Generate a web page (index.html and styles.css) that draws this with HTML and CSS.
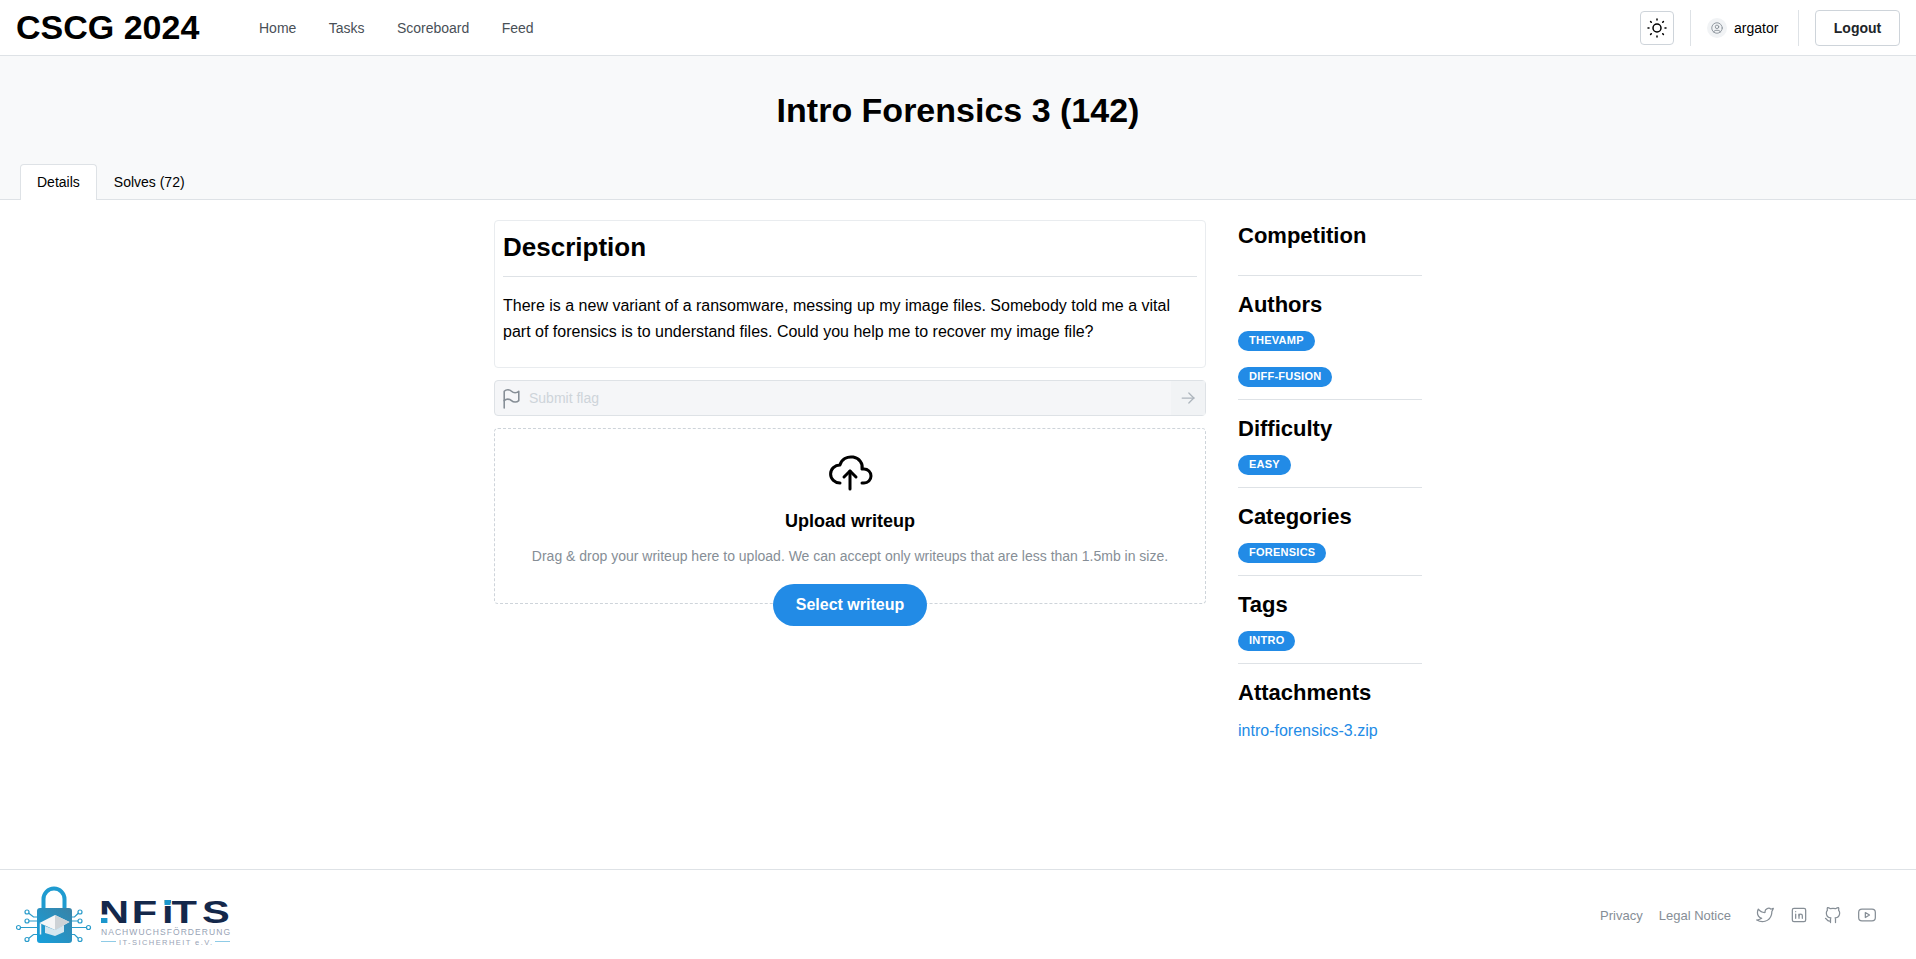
FILE: index.html
```html
<!DOCTYPE html>
<html lang="en">
<head>
    <meta charset="UTF-8">
    <meta name="viewport" content="width=device-width, initial-scale=1.0">
    <title>Intro Forensics 3</title>
    <link rel="stylesheet" href="styles.css">
</head>
<body>

<header class="topbar">
    <a class="brand" href="#">CSCG 2024</a>
    <nav class="nav">
        <a href="#">Home</a>
        <a href="#">Tasks</a>
        <a href="#">Scoreboard</a>
        <a href="#">Feed</a>
    </nav>
    <div class="topbar-right">
        <button class="theme-btn" aria-label="Toggle theme">
            <svg class="icon" width="24" height="24" viewBox="0 0 24 24" stroke-width="1.5"><circle cx="12" cy="12" r="4"/><path d="M3 12h1m8 -9v1m8 8h1m-9 8v1m-6.4 -15.4l.7 .7m12.1 -.7l-.7 .7m0 11.4l.7 .7m-12.1 -.7l-.7 .7"/></svg>
        </button>
        <div class="vline"></div>
        <div class="user">
            <span class="avatar">
                <svg class="icon" width="14" height="14" viewBox="0 0 24 24" stroke-width="1.5"><circle cx="12" cy="12" r="9"/><circle cx="12" cy="10" r="3"/><path d="M6.168 18.849a4 4 0 0 1 3.832 -2.849h4a4 4 0 0 1 3.834 2.855"/></svg>
            </span>
            <span>argator</span>
        </div>
        <div class="vline"></div>
        <button class="logout">Logout</button>
    </div>
</header>

<section class="hero">
    <h1>Intro Forensics 3 (142)</h1>
    <div class="tabs">
        <a class="tab active" href="#">Details</a>
        <a class="tab" href="#">Solves (72)</a>
    </div>
</section>

<main class="content">
    <div class="main-col">
        <div class="card">
            <h2>Description</h2>
            <hr>
            <p>There is a new variant of a ransomware, messing up my image files. Somebody told me a vital part of forensics is to understand files. Could you help me to recover my image file?</p>
        </div>

        <div class="flag-input">
            <svg class="icon flag-icon" width="25" height="25" viewBox="0 0 24 24" stroke-width="1.5"><path d="M5 5a5 5 0 0 1 7 0a5 5 0 0 0 7 0v9a5 5 0 0 1 -7 0a5 5 0 0 0 -7 0v-9z"/><path d="M5 21v-7"/></svg>
            <span class="placeholder">Submit flag</span>
            <span class="flag-send">
                <svg class="icon" width="20" height="20" viewBox="0 0 24 24" stroke-width="1.5"><path d="M5 12l14 0"/><path d="M13 18l6 -6"/><path d="M13 6l6 6"/></svg>
            </span>
        </div>

        <div class="dropzone">
            <svg class="icon upload-icon" width="48" height="48" viewBox="0 0 24 24" stroke-width="1.5"><path d="M7 18a4.6 4.4 0 0 1 0 -9a5 4.500 0 0 1 11 2h1a3.500 3.500 0 0 1 0 7h-1"/><path d="M9 15l3 -3l3 3"/><path d="M12 12l0 9"/></svg>
            <div class="drop-title">Upload writeup</div>
            <div class="drop-text">Drag &amp; drop your writeup here to upload. We can accept only writeups that are less than 1.5mb in size.</div>
            <button class="select-btn">Select writeup</button>
        </div>
    </div>

    <aside class="side-col">
        <div class="side-block competition">
            <h3>Competition</h3>
        </div>
        <div class="side-block">
            <h3>Authors</h3>
            <div class="badge-row"><span class="badge">thevamp</span></div>
            <div class="badge-row"><span class="badge">diff-fusion</span></div>
        </div>
        <div class="side-block">
            <h3>Difficulty</h3>
            <div class="badge-row"><span class="badge">easy</span></div>
        </div>
        <div class="side-block">
            <h3>Categories</h3>
            <div class="badge-row"><span class="badge">forensics</span></div>
        </div>
        <div class="side-block">
            <h3>Tags</h3>
            <div class="badge-row"><span class="badge">intro</span></div>
        </div>
        <div class="side-block last">
            <h3>Attachments</h3>
            <a class="attachment" href="#">intro-forensics-3.zip</a>
        </div>
    </aside>
</main>

<footer class="footer">
    <svg class="logo" width="216" height="63" viewBox="0 0 216 63">
        <defs>
            <linearGradient id="lock-fill" x1="0" y1="1" x2="1" y2="0">
                <stop offset="0" stop-color="#16a0dc"/>
                <stop offset="1" stop-color="#3a82a6"/>
            </linearGradient>
        </defs>
        <!-- circuit lines -->
        <g fill="none" stroke="#2a9ccb" stroke-width="1.2">
            <path d="M4 42.500h17M12 36h9M12.500 28l5 4h3.500M12.500 53.500l5 -4h3.500"/>
            <path d="M55 42.500h16M55 36h8M55 32h3.500l4 -4M55 49.500h3.500l4 4"/>
            <circle cx="2.500" cy="42.500" r="2" fill="#fff"/>
            <circle cx="11" cy="36" r="2" fill="#fff"/>
            <circle cx="11" cy="27" r="2" fill="#fff"/>
            <circle cx="11" cy="54.500" r="2" fill="#fff"/>
            <circle cx="64" cy="27" r="2" fill="#fff"/>
            <circle cx="64" cy="36" r="2" fill="#fff"/>
            <circle cx="72.500" cy="42.500" r="2" fill="#fff"/>
            <circle cx="64" cy="54.500" r="2" fill="#fff"/>
        </g>
        <path d="M27.500 24v-10a10.500 10.500 0 0 1 21 0v10" fill="none" stroke="#1f9bd0" stroke-width="4"/>
        <rect x="21" y="23" width="35" height="35" rx="3" fill="url(#lock-fill)"/>
        <path d="M29 41v7l10 3l9 -4v-7l-9 5z" fill="#d5e6ef"/>
        <path d="M23.500 38l15.500 -8l14.500 7l-14.500 8z" fill="#f5f6f7"/>
        <path d="M39 30l14.500 7l-14.500 8z" fill="#cdd2d6"/>
        <path d="M24.500 38.500v11" stroke="#f0f3f5" stroke-width="1.500"/>
        <text class="logo-main" transform="scale(1.3 1)" x="63.800 89 112.300 119.600 143" y="38" font-size="32">NFiTS</text>
        <rect class="logo-mark" x="148.500" y="15" width="6" height="5"/>
        <rect x="84" y="29.500" width="8" height="3.500" fill="#fff"/>
        <rect class="logo-mark" x="85" y="33" width="6" height="5"/>
        <text class="logo-sub" x="85" y="49.500" font-size="8.500" textLength="129" lengthAdjust="spacing">NACHWUCHSFÖRDERUNG</text>
        <text class="logo-sub" x="103" y="59.500" font-size="7.500" textLength="93" lengthAdjust="spacing">IT-SICHERHEIT e.V.</text>
        <path d="M85 56.500h15M199 56.500h15" stroke="#8fcbe6" stroke-width="1"/>
    </svg>
    <div class="footer-right">
        <a href="#">Privacy</a>
        <a href="#">Legal Notice</a>
        <div class="socials">
            <svg class="icon" width="20" height="20" viewBox="0 0 24 24" stroke-width="1.5"><path d="M22 4.010c-1 .49 -1.980 .689 -3 .99c-1.121 -1.265 -2.783 -1.335 -4.380 -.737s-2.643 2.060 -2.620 3.737v1c-3.245 .083 -6.135 -1.395 -8 -4c0 0 -4.182 7.433 4 11c-1.872 1.247 -3.739 2.088 -6 2c3.308 1.803 6.913 2.423 10.034 1.517c3.580 -1.040 6.522 -3.723 7.651 -7.742a13.840 13.840 0 0 0 .497 -3.753c0 -.249 1.510 -2.772 1.818 -4.013z"/></svg>
            <svg class="icon" width="20" height="20" viewBox="0 0 24 24" stroke-width="1.5"><path d="M4 6a2 2 0 0 1 2 -2h12a2 2 0 0 1 2 2v12a2 2 0 0 1 -2 2h-12a2 2 0 0 1 -2 -2z"/><path d="M8 11l0 5"/><path d="M8 8l0 .01"/><path d="M12 16l0 -5"/><path d="M16 16v-3a2 2 0 0 0 -4 0"/></svg>
            <svg class="icon" width="20" height="20" viewBox="0 0 24 24" stroke-width="1.5"><path d="M9 19c-4.300 1.400 -4.300 -2.500 -6 -3m12 5v-3.500c0 -1 .1 -1.400 -.5 -2c2.800 -.3 5.500 -1.400 5.500 -6a4.600 4.600 0 0 0 -1.300 -3.200a4.200 4.200 0 0 0 -.1 -3.200s-1.100 -.3 -3.500 1.300a12.300 12.300 0 0 0 -6.200 0c-2.400 -1.600 -3.500 -1.300 -3.500 -1.300a4.200 4.200 0 0 0 -.1 3.200a4.600 4.600 0 0 0 -1.300 3.200c0 4.600 2.700 5.700 5.500 6c-.6 .6 -.6 1.200 -.5 2v3.500"/></svg>
            <svg class="icon" width="20" height="20" viewBox="0 0 24 24" stroke-width="1.5"><path d="M2 9a4 4 0 0 1 4 -4h12a4 4 0 0 1 4 4v6a4 4 0 0 1 -4 4h-12a4 4 0 0 1 -4 -4z"/><path d="M10 9l5 3l-5 3z"/></svg>
        </div>
    </div>
</footer>

</body>
</html>
```

FILE: styles.css
```css
* {
    box-sizing: border-box;
}

body {
    font-family: 'Liberation Sans', Arial, sans-serif;
    background-color: #fff;
    color: #000;
    margin: 0;
    min-height: 100vh;
    display: flex;
    flex-direction: column;
    font-size: 14px;
}

a {
    text-decoration: none;
    color: inherit;
}

button {
    font-family: inherit;
    cursor: pointer;
}

.icon {
    fill: none;
    stroke: currentColor;
    stroke-linecap: round;
    stroke-linejoin: round;
    display: block;
    flex: none;
}

/* Top bar */
.topbar {
    height: 56px;
    flex: none;
    display: flex;
    align-items: center;
    padding: 0 16px;
    border-bottom: 1px solid #dee2e6;
}

.brand {
    font-size: 34px;
    font-weight: 700;
    width: 243px;
    color: #000;
}

.nav {
    display: flex;
    gap: 32.4px;
    color: #495057;
}

.topbar-right {
    margin-left: auto;
    display: flex;
    align-items: center;
}

.theme-btn {
    width: 34px;
    height: 34px;
    padding: 0;
    background: #fff;
    border: 1px solid #ced4da;
    border-radius: 4px;
    color: #000;
    display: flex;
    align-items: center;
    justify-content: center;
}

.vline {
    width: 1px;
    height: 36px;
    background-color: #dee2e6;
    margin: 0 16px;
}

.user {
    display: flex;
    align-items: center;
    gap: 7px;
    width: 75px;
    color: #000;
}

.avatar {
    width: 20px;
    height: 20px;
    flex: none;
    border-radius: 50%;
    background-color: #f1f3f5;
    color: #868e96;
    display: flex;
    align-items: center;
    justify-content: center;
}

.logout {
    height: 36px;
    width: 85px;
    padding: 0;
    background: #fff;
    border: 1px solid #ced4da;
    border-radius: 4px;
    font-size: 14px;
    font-weight: 700;
    color: #212529;
}

/* Title band and tabs */
.hero {
    flex: none;
    background-color: #f8f9fa;
    border-bottom: 1px solid #dee2e6;
    height: 144px;
    padding: 32px 20px 0;
}

.hero h1 {
    margin: 0;
    height: 76px;
    text-align: center;
    font-size: 34px;
    line-height: 44px;
    font-weight: 700;
}

.tabs {
    display: flex;
}

.tab {
    height: 36px;
    padding: 0 16px;
    line-height: 35px;
    font-size: 14px;
    color: #000;
    border: 1px solid transparent;
    border-bottom: none;
    border-radius: 4px 4px 0 0;
}

.tab.active {
    background-color: #fff;
    border-color: #dee2e6;
}

/* Main content */
.content {
    flex: 1;
    width: 928px;
    margin: 0 auto;
    padding-top: 20px;
    display: flex;
    gap: 32px;
}

.main-col {
    width: 712px;
    flex: none;
}

.side-col {
    width: 184px;
    flex: none;
}

.card {
    height: 148px;
    border: 1px solid #e9ecef;
    border-radius: 4px;
    padding: 8px;
}

.card h2 {
    margin: 0;
    font-size: 26px;
    line-height: 36px;
    font-weight: 700;
}

.card hr {
    border: none;
    border-top: 1px solid #dee2e6;
    margin: 11px 0 16px;
}

.card p {
    margin: 0;
    font-size: 16px;
    line-height: 26px;
}

.flag-input {
    height: 36px;
    margin-top: 12px;
    background-color: #f5f6f8;
    border: 1px solid #dee2e6;
    border-radius: 4px;
    display: flex;
    align-items: center;
    color: #868e96;
}

.flag-icon {
    margin-left: 4px;
}

.placeholder {
    margin-left: 5px;
    color: #ced4da;
    flex: 1;
}

.flag-send {
    width: 34px;
    height: 34px;
    background-color: #f1f3f5;
    color: #adb5bd;
    display: flex;
    align-items: center;
    justify-content: center;
}

.dropzone {
    height: 176px;
    margin-top: 12px;
    border: 1px dashed #ced4da;
    border-radius: 4px;
    display: flex;
    flex-direction: column;
    align-items: center;
    padding-top: 18px;
}

.drop-title {
    margin-top: 14px;
    font-size: 18px;
    line-height: 24px;
    font-weight: 700;
}

.drop-text {
    margin-top: 13px;
    line-height: 20px;
    color: #868e96;
}

.select-btn {
    flex: none;
    margin-top: 18px;
    height: 42px;
    width: 154px;
    padding: 0;
    border: none;
    border-radius: 21px;
    background-color: #228be6;
    color: #fff;
    font-size: 16px;
    font-weight: 700;
}

/* Sidebar */
.side-block {
    border-bottom: 1px solid #dee2e6;
    padding-bottom: 12px;
}

.side-block + .side-block {
    padding-top: 15px;
}

.side-block.competition {
    height: 56px;
    padding-top: 2px;
    padding-bottom: 0;
}

.side-block.last {
    border-bottom: none;
}

.side-block h3 {
    margin: 0 0 13px;
    font-size: 22px;
    line-height: 27px;
    font-weight: 700;
}

.badge-row {
    height: 20px;
    display: flex;
}

.badge-row + .badge-row {
    margin-top: 16px;
}

.badge {
    height: 20px;
    padding: 0 11px;
    border-radius: 10px;
    background-color: #228be6;
    color: #fff;
    font-size: 11px;
    line-height: 19px;
    font-weight: 700;
    letter-spacing: 0.25px;
    text-transform: uppercase;
}

.attachment {
    display: block;
    margin-top: 13px;
    font-size: 16px;
    line-height: 24px;
    color: #228be6;
}

/* Footer */
.footer {
    flex: none;
    height: 90px;
    border-top: 1px solid #dee2e6;
    display: flex;
    align-items: flex-start;
    padding: 15px 16px 0;
}

.logo {
    display: block;
}

.logo-main {
    font-family: 'Liberation Sans', sans-serif;
    font-weight: 700;
    fill: #14284b;
}

.logo-mark {
    fill: #1c97cc;
}

.logo-sub {
    font-family: 'Liberation Sans', sans-serif;
    fill: #98a3b5;
}

.footer-right {
    margin-left: auto;
    display: flex;
    align-items: center;
    gap: 16px;
    height: 20px;
    margin-top: 20px;
    padding-right: 23px;
    font-size: 13px;
    color: #868e96;
}

.socials {
    display: flex;
    gap: 14px;
    margin-left: 8px;
}
```
